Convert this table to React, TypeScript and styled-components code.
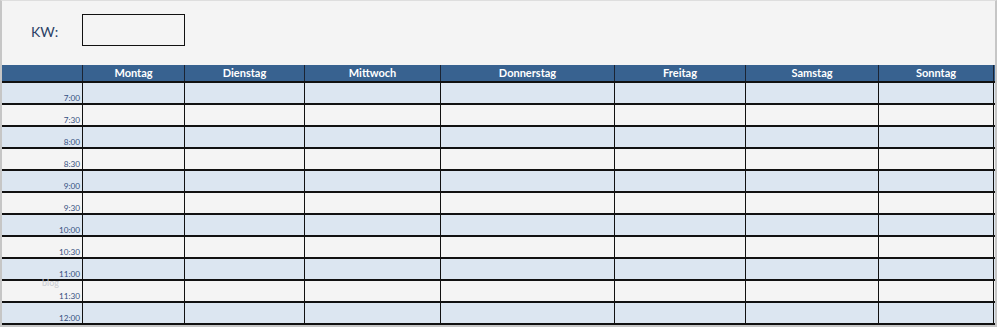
import React from "react";
import styled, { createGlobalStyle } from "styled-components";

const GlobalStyle = createGlobalStyle`
  html, body { margin: 0; padding: 0; background: #f4f4f4; }
  body { font-family: Lato, "Liberation Sans", sans-serif; }
`;

const COLS = [81, 102, 120, 136, 174, 131, 133, 115];
const DAYS = ["Montag", "Dienstag", "Mittwoch", "Donnerstag", "Freitag", "Samstag", "Sonntag"];
const TIMES = ["7:00", "7:30", "8:00", "8:30", "9:00", "9:30", "10:00", "10:30", "11:00", "11:30", "12:00"];
const template = COLS.map((c) => `${c}px`).join(" ");

const Frame = styled.div`
  position: relative;
  box-sizing: border-box;
  width: 997px;
  height: 327px;
  overflow: hidden;
  background: #f4f4f4;
  border-top: 1px solid #dedede;
  border-left: 2px solid #c6c6c6;
  border-right: 2px solid #c6c6c6;
  border-bottom: 2px solid #c6c6c6;
`;

const TopBar = styled.div`
  display: grid;
  grid-template-columns: 80px 103px;
  height: 64px;
`;

const WeekLabel = styled.div`
  padding: 22px 0 0 29px;
  font-size: 14px;
  line-height: 17px;
  color: #2a3f66;
`;

const WeekBox = styled.div`
  box-sizing: border-box;
  margin-top: 13px;
  height: 32px;
  border: 1px solid #111;
  background: #f4f4f4;
`;

const Row = styled.div<{ $header?: boolean; $shaded?: boolean }>`
  display: grid;
  grid-template-columns: ${template};
  height: ${(p) => (p.$header ? 16 : 20)}px;
  border-bottom: 2px solid #111;
  background: ${(p) => (p.$header ? "#386290" : p.$shaded ? "#dce6f1" : "#f4f4f4")};
`;

const HeadCell = styled.div`
  border-right: 1px solid #1b2433;
  color: #fff;
  font-weight: 700;
  font-size: 11px;
  line-height: 16px;
  text-align: center;
`;

const Cell = styled.div`
  border-right: 1px solid #111;
`;

const TimeCell = styled.div`
  border-right: 1px solid #111;
  display: flex;
  align-items: flex-end;
  justify-content: flex-end;
  padding-right: 2px;
  font-size: 8.2px;
  line-height: 9px;
  color: #34507f;
`;

const Watermark = styled.div`
  position: absolute;
  left: 40px;
  top: 277px;
  font-size: 9px;
  line-height: 10px;
  color: #c9ccd2;
  pointer-events: none;
`;

export default function App() {
  return (
    <>
      <GlobalStyle />
      <Frame>
        <TopBar>
          <WeekLabel>KW:</WeekLabel>
          <WeekBox />
        </TopBar>
        <Row $header>
          <HeadCell />
          {DAYS.map((d) => (
            <HeadCell key={d}>{d}</HeadCell>
          ))}
        </Row>
        {TIMES.map((t, i) => (
          <Row key={t} $shaded={i % 2 === 0}>
            <TimeCell>{t}</TimeCell>
            {DAYS.map((d) => (
              <Cell key={d} />
            ))}
          </Row>
        ))}
        <Watermark>blog</Watermark>
      </Frame>
    </>
  );
}
